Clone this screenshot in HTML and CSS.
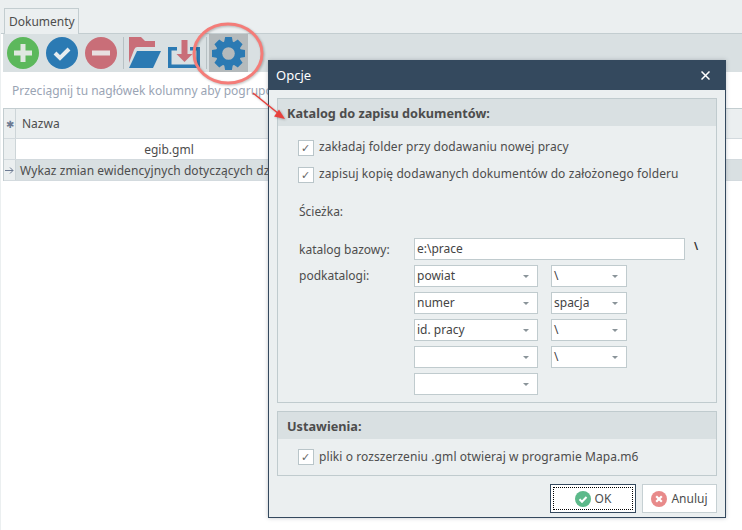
FILE: index.html
```html
<!DOCTYPE html>
<html lang="pl">
<head>
<meta charset="utf-8">
<title>Opcje</title>
<link rel="stylesheet" href="styles.css">
</head>
<body>
<div class="app">
  <div class="tabs"><div class="tab">Dokumenty</div></div>
  <div class="toolbar">
    <svg class="tool" width="32" height="32" viewBox="0 0 32 32"><circle cx="16" cy="16" r="16" fill="#5cb85c"/><path d="M13.500 7h5v6.500H25v5h-6.500V25h-5v-6.500H7v-5h6.500z" fill="#dfe8e0"/></svg>
    <svg class="tool" width="32" height="32" viewBox="0 0 32 32"><circle cx="16" cy="16" r="16" fill="#2b7ab3"/><path d="M9 16l5 5 9-9" fill="none" stroke="#e6ecef" stroke-width="4"/></svg>
    <svg class="tool" width="32" height="32" viewBox="0 0 32 32"><circle cx="16" cy="16" r="16" fill="#c96e78"/><rect x="7" y="13.500" width="18" height="5" fill="#e8dfe0"/></svg>
    <span class="sep"></span>
    <svg class="tool" width="32" height="32" viewBox="0 0 32 32"><path d="M0 0H12l4 4H26V10H8Q6 10 5 13L0 26z" fill="#c96e78"/><path d="M8 14H32L24 31H0z" fill="#2b7ab3"/></svg>
    <svg class="tool" width="32" height="32" viewBox="0 0 32 32"><path d="M9 11.750H1.750V29.250H30.250V11.750H22" fill="none" stroke="#2b7ab3" stroke-width="3.500"/><path d="M13.500 3h6v14h5l-8 8-8-8h5z" fill="#c96e78"/></svg>
    <span class="sep"></span>
    <span class="gearbox">
      <svg width="33" height="33" viewBox="0 0 34 34" fill="#2b7ab3">
        <circle cx="17" cy="17" r="13"/>
        <path d="M13.500 0H20.500L22 8V26L20.500 34H13.500L12 26V8z"/>
        <path d="M13.500 0H20.500L22 8V26L20.500 34H13.500L12 26V8z" transform="rotate(45 17 17)"/>
        <path d="M13.500 0H20.500L22 8V26L20.500 34H13.500L12 26V8z" transform="rotate(90 17 17)"/>
        <path d="M13.500 0H20.500L22 8V26L20.500 34H13.500L12 26V8z" transform="rotate(135 17 17)"/>
        <circle cx="17" cy="17" r="6.500" fill="#b4babc"/>
      </svg>
    </span>
  </div>
  <div class="group-hint">Przeciągnij tu nagłówek kolumny aby pogrupować</div>
  <div class="grid">
    <div class="head"><span class="ind">✱</span><span class="cell">Nazwa</span></div>
    <div class="row"><span class="ind"></span><span class="cell center">egib.gml</span></div>
    <div class="row selected"><span class="ind"><svg width="9" height="9" viewBox="0 0 9 9"><path d="M0 4.500h8M5 1.500l3 3-3 3" fill="none" stroke="#6d7b93"/></svg></span><span class="cell">Wykaz zmian ewidencyjnych dotyczących działek</span></div>
  </div>
</div>

<div class="dialog">
  <div class="title"><span>Opcje</span><svg width="9" height="9" viewBox="0 0 9 9"><path d="M.5.500l8 8M8.500.500l-8 8" stroke="#fff" stroke-width="1.500"/></svg></div>
  <div class="dialog-body">
    <section class="panel first">
      <h2>Katalog do zapisu dokumentów:</h2>
      <div class="panel-content">
        <label class="check"><span class="box">✓</span>zakładaj folder przy dodawaniu nowej pracy</label>
        <label class="check second"><span class="box">✓</span>zapisuj kopię dodawanych dokumentów do założonego folderu</label>
        <div class="path-label">Ścieżka:</div>
        <div class="base-row">
          <span class="lbl">katalog bazowy:</span>
          <span class="input wide">e:\prace</span>
          <span class="slash">\</span>
        </div>
        <div class="sub-row">
          <span class="lbl">podkatalogi:</span>
          <div class="combos">
            <span class="input combo">powiat<i class="caret"></i></span><span class="input combo small">\<i class="caret"></i></span>
            <span class="input combo">numer<i class="caret"></i></span><span class="input combo small">spacja<i class="caret"></i></span>
            <span class="input combo">id. pracy<i class="caret"></i></span><span class="input combo small">\<i class="caret"></i></span>
            <span class="input combo"><i class="caret"></i></span><span class="input combo small">\<i class="caret"></i></span>
            <span class="input combo"><i class="caret"></i></span>
          </div>
        </div>
      </div>
    </section>
    <section class="panel">
      <h2>Ustawienia:</h2>
      <div class="panel-content tight">
        <label class="check"><span class="box">✓</span>pliki o rozszerzeniu .gml otwieraj w programie Mapa.m6</label>
      </div>
    </section>
    <div class="buttons">
      <button class="btn ok"><span class="focus"><svg width="16" height="16" viewBox="0 0 16 16"><circle cx="8" cy="8" r="8" fill="#5cb98a"/><path d="M4.500 8.200l2.500 2.500 4.500-4.700" fill="none" stroke="#fff" stroke-width="2"/></svg>OK</span></button>
      <button class="btn cancel"><svg width="16" height="16" viewBox="0 0 16 16"><circle cx="8" cy="8" r="8" fill="#e88a8a"/><path d="M5.200 5.200l5.600 5.600M10.800 5.200l-5.600 5.600" stroke="#fff" stroke-width="2.200"/></svg>Anuluj</button>
    </div>
  </div>
</div>

<svg class="annotation" width="742" height="530" viewBox="0 0 742 530">
  <ellipse cx="228" cy="53.500" rx="34" ry="29.500" fill="none" stroke="#f47c78" stroke-width="3"/>
  <path d="M253 93L279 114" stroke="#e8403c" stroke-width="1.500" fill="none"/>
  <path d="M285 119l-11-2.500 5-7z" fill="#e8403c"/>
</svg>
</body>
</html>
```
FILE: styles.css
```css
* { box-sizing: border-box; }
html, body { margin: 0; height: 100%; }
body {
  width: 742px;
  height: 530px;
  overflow: hidden;
  position: relative;
  background: #fff;
  font-family: "Noto Sans", sans-serif;
  font-size: 12px;
  color: #4d4d4d;
}
.app { display: flex; flex-direction: column; height: 530px; padding-left: 3px; background: #fff; border-left: 1px solid #ebeff0; }
.tabs { height: 34px; margin-left: -3px; padding: 8px 0 0 3px; background: #ebeff0; border-bottom: 1px solid #c3cdd0; }
.tab { width: 75px; height: 26px; background: #ebeff0; border: 1px solid #c3cdd0; border-bottom: 0; padding: 4px 0 0 4px; }
.toolbar { height: 38px; background: #d9e0e2; display: flex; align-items: center; padding-left: 4px; gap: 7px; margin-left: -1px; }
.tool { flex: none; }
.sep { width: 1px; height: 32px; background: #b7c1c4; margin: 0 -2px 0 -1px; }
.gearbox { width: 39px; height: 38px; background: #b4babc; display: flex; align-items: center; justify-content: center; margin-left: -3px; }
.group-hint { height: 37px; padding: 10px 0 0 9px; color: #9aa4b4; white-space: nowrap; border-bottom: 1px solid #c3cdd0; margin-left: -1px; }
.grid { display: flex; flex-direction: column; margin-left: -1px; border-left: 1px solid #c3cdd0; }
.head, .row { display: flex; border-bottom: 1px solid #d3dade; }
.head { height: 30px; background: #ebeff0; align-items: stretch; }
.row { height: 21px; background: #fff; }
.row.selected { background: #d9e0e2; }
.ind { width: 12px; flex: none; background: #ebeff0; border-right: 1px solid #cdd5d8; display: flex; align-items: center; justify-content: center; font-size: 10px; color: #6d7b93; overflow: hidden; }
.cell { flex: 1; padding: 0 4px; display: flex; align-items: center; white-space: nowrap; overflow: hidden; }
.selected .cell { letter-spacing: .08px; }
.head .cell { padding-left: 6px; }
.center { justify-content: center; width: 310px; flex: none; padding-left: 0; }

.dialog {
  position: absolute;
  left: 268px; top: 60px;
  width: 458px; height: 458px;
  background: #ebeff0;
  border: 1px solid #34495e;
  border-top: 0;
  box-shadow: 0 0 4px rgba(80, 90, 100, .35);
}
.title { height: 30px; margin: 0 -1px; background: #34495e; color: #fff; display: flex; justify-content: space-between; align-items: center; padding: 0 16px 0 8px; font-size: 13px; }
.dialog-body { padding: 8px 8px 0 8px; display: flex; flex-direction: column; gap: 8px; }
.panel { border: 1px solid #c0cbce; }
.panel.first { height: 305px; }
.panel h2 { margin: 0; height: 27px; background: #d9e0e2; font-size: 12.700px; font-weight: 700; padding: 5px 0 0 9px; }
.panel-content { padding: 14px 0 0 20px; }
.panel-content.tight { padding: 10px 0 0 20px; height: 36px; }
.check { display: flex; align-items: flex-start; gap: 5px; height: 16px; line-height: 14px; letter-spacing: .08px; white-space: nowrap; }
.tight .check { line-height: 16px; }
.check.second { margin-top: 11px; }
.box { width: 16px; height: 16px; background: #fff; border: 1px solid #b9c5c9; display: flex; align-items: center; justify-content: center; font-size: 11px; color: #666; flex: none; }
.path-label { margin: 20px 0 0 1px; height: 16px; }
.base-row { display: flex; align-items: center; margin-top: 19px; }
.lbl { width: 116px; padding-left: 1px; flex: none; }
.input { background: #fff; border: 1px solid #c0cbce; height: 22px; padding: 1px 0 0 2px; position: relative; white-space: nowrap; color: #444; }
.wide { width: 271px; }
.slash { margin-left: 9px; font-weight: 700; font-size: 10px; margin-top: -6px; color: #333; }
.sub-row { display: flex; margin-top: 5px; }
.sub-row .lbl { padding-top: 2px; }
.combos { display: grid; grid-template-columns: 124px 76px; column-gap: 13px; row-gap: 5px; }
.combo { display: block; }
.caret { position: absolute; right: 8px; top: 9px; width: 0; height: 0; border: 3px solid transparent; border-top: 3px solid #8a9499; }
.buttons { display: flex; justify-content: flex-end; gap: 6px; }
.btn { height: 29px; font: inherit; color: #4d4d4d; background: #fff; border: 1px solid #c6d0d3; padding: 0; display: flex; align-items: center; justify-content: center; gap: 4px; }
.btn.ok { width: 86px; border: 1px solid #34495e; padding: 2px; }
.btn.cancel { width: 75px; }
.focus { width: 100%; height: 100%; border: 1px dotted #000; display: flex; align-items: center; justify-content: center; gap: 4px; }
.annotation { position: absolute; left: 0; top: 0; pointer-events: none; filter: drop-shadow(1px 1px 1px rgba(0, 0, 0, .25)); }
```
